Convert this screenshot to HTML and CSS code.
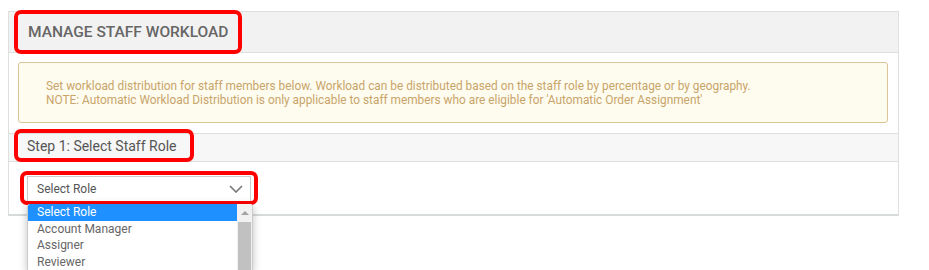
FILE: index.html
```html
<!DOCTYPE html>
<html lang="en">
<head>
    <meta charset="UTF-8">
    <meta name="viewport" content="width=device-width, initial-scale=1.0">
    <title>Manage Staff Workload</title>
    <link rel="stylesheet" href="styles.css">
</head>
<body>
    <div class="panel">
        <div class="panel-head">
            <h1 class="marked">MANAGE STAFF WORKLOAD</h1>
        </div>
        <div class="panel-body">
            <div class="note">
                Set workload distribution for staff members below. Workload can be distributed based on the staff role by percentage or by geography.<br>
                NOTE: Automatic Workload Distribution is only applicable to staff members who are eligible for 'Automatic Order Assignment'
            </div>
        </div>
        <div class="step-head">
            <h2 class="marked">Step 1: Select Staff Role</h2>
        </div>
        <div class="step-body">
            <div class="select-wrap marked">
                <div class="select">
                    <span>Select Role</span>
                    <svg width="14" height="8" viewBox="0 0 14 8"><polyline points="1,1 7,7 13,1" fill="none" stroke="#777" stroke-width="1.6"/></svg>
                </div>
            </div>
            <div class="options">
                <ul>
                    <li class="active">Select Role</li>
                    <li>Account Manager</li>
                    <li>Assigner</li>
                    <li>Reviewer</li>
                </ul>
                <div class="scrollbar">
                    <div class="arrow"></div>
                    <div class="thumb"></div>
                </div>
            </div>
        </div>
    </div>
</body>
</html>
```

FILE: styles.css
```css
html {
    height: 100%;
    overflow: hidden;
}

body {
    margin: 0;
    height: 100%;
    box-sizing: border-box;
    padding: 11px 30px 0 8px;
    background-color: #fff;
    font-family: Roboto, 'Liberation Sans', sans-serif;
    color: #555;
}

.panel {
    border: 1px solid #dde0dd;
    border-bottom: 2px solid #d8dcd8;
    position: relative;
}

.marked {
    outline: 4px solid #f00;
    border-radius: 3px;
}

.panel-head {
    background-color: #f2f2f2;
    border-bottom: 1px solid #dde0dd;
    height: 40px;
    display: flex;
    align-items: center;
    padding: 0 9px;
}

.panel-head h1 {
    margin: 0;
    font-size: 15.5px;
    font-weight: 500;
    color: #666;
    height: 36px;
    line-height: 37px;
    padding: 0 10px;
}

.panel-body {
    padding: 9px 10px 10px 9px;
}

.note {
    background-color: #fefcef;
    border: 1px solid #dcc597;
    border-radius: 3px;
    color: #c9a46a;
    font-size: 11.85px;
    line-height: 14px;
    padding: 16px 27px 15px;
}

.step-head {
    background-color: #f7f7f7;
    border-top: 1px solid #dde0dd;
    border-bottom: 1px solid #dde0dd;
    height: 27px;
    padding: 0 9px;
}

.step-head h2 {
    margin: -1px 0 0 0;
    display: inline-block;
    font-size: 14px;
    font-weight: 400;
    color: #555;
    height: 25px;
    line-height: 27px;
    padding: 0 14px 0 9px;
}

.step-body {
    padding: 13px 0 13px 15px;
    position: relative;
}

.select-wrap {
    display: inline-block;
    padding: 1px 3px 0;
}

.select {
    width: 206px;
    height: 24px;
    border: 1px solid #ccc;
    border-bottom: 0;
    padding: 0 7px 0 9px;
    display: flex;
    align-items: center;
    justify-content: space-between;
    font-size: 12px;
    color: #555;
    background-color: #fff;
}

.options {
    position: absolute;
    z-index: 2;
    top: 42px;
    left: 18px;
    width: 224px;
    height: 66px;
    background-color: #fff;
    border: 1px solid #ccc;
    border-top: 0;
    border-bottom: 0;
    border-radius: 3px 3px 0 0;
    box-shadow: 0 2px 8px rgba(0, 0, 0, 0.25);
    display: flex;
    overflow: hidden;
}

.options ul {
    list-style: none;
    margin: 0;
    padding: 0;
    flex: 1;
}

.options li {
    height: 16.5px;
    line-height: 16.5px;
    font-size: 12px;
    padding-left: 9px;
    color: #666;
}

.options li.active {
    background-color: #1e90ff;
    color: #fff;
}

.scrollbar {
    width: 15px;
    background-color: #f1f1f1;
    display: flex;
    flex-direction: column;
    align-items: center;
}

.arrow {
    margin-top: 7px;
    width: 0;
    height: 0;
    border-left: 4px solid transparent;
    border-right: 4px solid transparent;
    border-bottom: 4px solid #a3a3a3;
}

.thumb {
    margin-top: 7px;
    width: 13px;
    flex: 1;
    background-color: #c1c1c1;
}
```
